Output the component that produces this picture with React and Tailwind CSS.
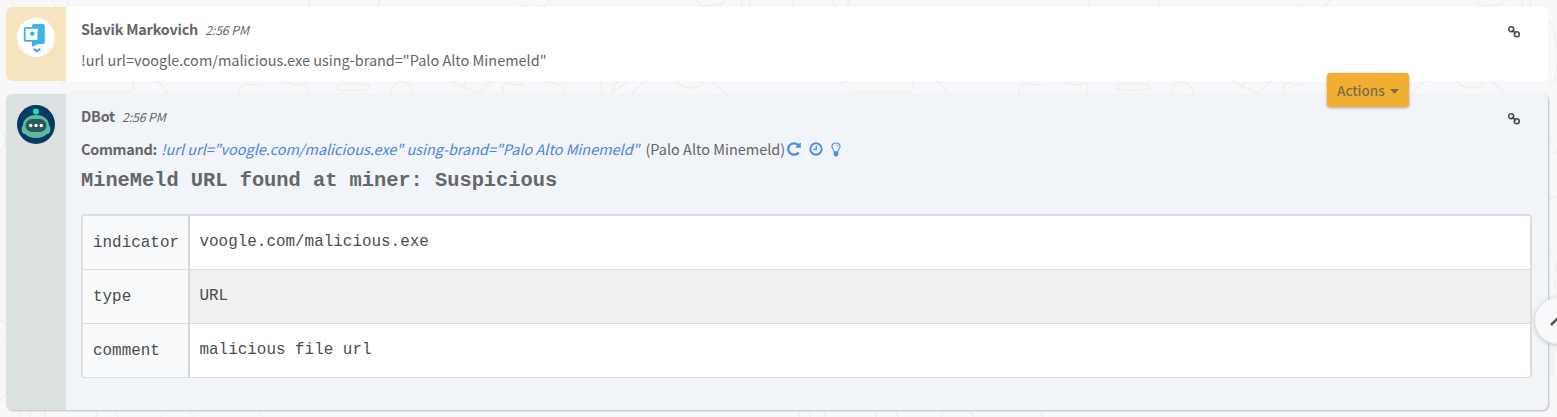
const sans = "font-['Noto_Sans_CJK_SC','Noto_Sans',sans-serif]";
const mono = "font-['Liberation_Mono',monospace]";

function LinkIcon() {
  return (
    <svg viewBox="0 0 14 14" className="mt-1 -mr-px size-3.5 shrink-0" fill="none" stroke="#4a4a4a" strokeWidth="1.5">
      <circle cx="4.2" cy="4.2" r="2.500" />
      <circle cx="9.800" cy="9.300" r="2.500" />
      <path d="M4.800 5.200l4.200 3.200" strokeWidth="1.500" />
    </svg>
  );
}

function Doodle() {
  return (
    <g>
      <path d="M12 0c2 10 0 14 5 20s18 6 28 2M52 0l4 7M70 0c-3 4-3 8-3 8M60 84c8-6 20-2 24-8s12-6 16 0l28 2c8 2 6 14 0 14H70M150 78c10 2 20 14 22 30M262 84c-12 4-20-8-24 10M282 84c8-4 12 4 20 0s4 6 6 10" />
      <path d="M310 0c-4 12-2 20 4 26M380 0l-8 22M338 84h28c4 0 4 6 0 6h-26c-4 0-4-6-2-6zm4 8l2 10M362 92l-2 8M390 96c2-18 20-20 24 0M450 80l28 14 14-14M460 88l6-6M504 92c-4-6 4-12 8-8s10-4 12 2M546 84c8-6 10 4 16 0s4 6 2 10M518 3c10 8 26 8 32-3M0 130c8 4 6 20-2 22M0 320c10 2 10 20 0 22M0 400c12-14 18-2 20 20M30 409v8M45 409v8M96 417c0-12 20-12 22 0M165 409l-4 8M180 409c8 0 12 4 14 8M255 409c4 2 6 4 8 8" />
      <path d="M602 94c-2-8 0-12 0-14M612 92c2-12 12-14 14-12s-10 10-14 12M632 94c12-14 16-16 26-16M674 78c8 12 24 14 30 2M706 76l20 18M696 0l6 6 20-2 4-6M742 0v8M750 0v8" />
    </g>
  );
}

function Backdrop() {
  return (
    <svg className="absolute inset-0 size-full" viewBox="0 0 1557 417" fill="none" stroke="#eeefef" strokeWidth="1.4">
      <Doodle />
      <g transform="translate(780 0)"><Doodle /></g>
      <path d="M1549 20c8 8 4 16 8 30M1549 88c6-10 8-16 8-28M1549 140c6 4 4 10 8 14M1549 200l8-6M1549 250c5 4 6 16 8 20M1549 280c8-4 8 10 2 8 8 2 6 10-2 8M1549 350h8M1552 354v24" />
    </svg>
  );
}

function UserAvatar() {
  return (
    <svg viewBox="0 0 38 39" className="h-[39px] w-[38px]">
      <ellipse cx="19" cy="19.5" rx="19" ry="19.5" fill="#fff" />
      <path d="M17 6h9q1.800 0 1.800 2v16q0 2-1.800 2h-4.500l-6.500 2.800V8q0-2 2-2z" fill="#3fb1e5" />
      <path d="M8.500 9.800h13.800l-1 5v8H8.500q-.8 0-.8-1v-11q0-1 .8-1z" fill="#fff" stroke="#3fb1e5" strokeWidth="1.800" />
      <circle cx="15.300" cy="15.800" r="2.200" fill="#3fb1e5" />
      <path d="M16.800 30.800l3.200 2.600 3.200-2.600" fill="none" stroke="#3fb1e5" strokeWidth="2.200" />
    </svg>
  );
}

function BotAvatar() {
  return (
    <svg viewBox="0 0 38 39" className="h-[39px] w-[38px]">
      <ellipse cx="19" cy="19.5" rx="19" ry="19.5" fill="#063a63" />
      <path d="M19 10c8 0 13 5 13 10q2 2 1 7-1 2-3 2-4 4-11 4T8 29q-2 0-3-2-1-5 1-7c0-5 5-10 13-10z" fill="#5cb8a1" />
      <rect x="8.500" y="14" width="21" height="13" rx="6.500" fill="#2a5957" />
      <circle cx="19" cy="6.500" r="3.600" fill="#063a63" />
      <circle cx="19" cy="6.500" r="2.900" fill="#0ff0a0" />
      <g fill="#fff"><circle cx="13.700" cy="20.500" r="1.700" /><circle cx="19" cy="20.500" r="1.700" /><circle cx="24.300" cy="20.500" r="1.700" /></g>
    </svg>
  );
}

function CommandIcons() {
  return (
    <div className="ml-0.5 flex items-center text-[#4a90e2]">
      <svg viewBox="0 0 1536 1792" className="h-4 w-3.5" fill="currentColor">
        <path d="M1536 256v448q0 26-19 45t-45 19h-448q-42 0-59-40-17-39 14-69l138-138Q969 384 768 384q-104 0-198.500 40.500T406 534 296.500 697.500 256 896t40.500 198.500T406 1258t163.500 109.500T768 1408q119 0 225-52t179-147q7-10 23-12 15 0 25 9l137 138q9 8 9.500 20.500t-7.500 22.500q-109 132-264 204.500T768 1664q-156 0-298-61t-245-164-164-245T0 896t61-298 164-245T470 189 768 128q147 0 284.500 55.500T1297 340l130-129q29-31 70-14 39 17 39 59z" />
      </svg>
      <svg viewBox="0 0 14 14" className="ml-2 size-3.5" fill="none" stroke="currentColor">
        <circle cx="7" cy="7" r="5.700" strokeWidth="1.900" />
        <path d="M7.300 3.500v4H4.500" strokeWidth="1.300" />
      </svg>
      <svg viewBox="0 0 10 15" className="ml-2 h-[15px] w-2.5" fill="none" stroke="currentColor">
        <path d="M3.200 9.500C3 7.500 1 6.800 1 4.500 1 2.300 2.800 1 5 1s4 1.300 4 3.500c0 2.300-2 3-2.200 5" strokeWidth="1.200" />
        <path d="M5 3q1.800 0 1.800 1.500" strokeWidth=".8" />
        <path d="M2.700 9.300h4.600v3.700L6 14.500H4L2.700 13z" fill="currentColor" stroke="none" />
      </svg>
    </div>
  );
}

function Header({ name }) {
  return (
    <div className="flex h-5 items-center justify-between pr-7">
      <div className="-mt-0.5 flex items-baseline leading-5">
        <b className="text-[14.4px] tracking-[-0.2px]">{name}</b>
        <i className="ml-[7px] text-[12.4px] tracking-[-0.15px]">2:56 PM</i>
      </div>
      <LinkIcon />
    </div>
  );
}

const rows = [
  ["indicator", "voogle.com/malicious.exe"],
  ["type", "URL"],
  ["comment", "malicious file url"],
];

export default function App() {
  return (
    <div className={`relative h-[417px] w-[1557px] overflow-hidden bg-[#f8f8fa] text-[#666] ${sans}`}>
      <Backdrop />
      <main className="relative flex flex-col gap-[13px] pt-[7px] pr-[9px] pl-1.5">
        <section className="flex h-[74px] overflow-hidden rounded-md bg-white">
          <div className="w-[60px] bg-[#f6e4c1] pt-[11px] pl-[11px]"><UserAvatar /></div>
          <div className="flex-1 pt-[13px] pl-[15px]">
            <Header name="Slavik Markovich" />
            <p className="mt-2.5 text-[14.47px] leading-5">!url url=voogle.com/malicious.exe using-brand="Palo Alto Minemeld"</p>
          </div>
        </section>
        <section className="flex h-[316px] rounded-md bg-[#f1f4f9] shadow-[1px_1px_2px_#bbb]">
          <div className="w-[60px] rounded-l-md bg-[#dbe2e1] pt-[11px] pl-[11px]"><BotAvatar /></div>
          <div className="flex-1 pt-[13px] pl-[15px]">
            <Header name="DBot" />
            <div className="mt-3 flex h-5 items-center text-[14.47px] leading-5 whitespace-nowrap">
              <b className="tracking-[-0.3px]">Command:</b>
              <i className="ml-1 tracking-[-0.01px] text-[#4a86dc]">!url url="voogle.com/malicious.exe" using-brand="Palo Alto Minemeld"</i>
              <span className="ml-1.5">(Palo Alto Minemeld)</span>
              <CommandIcons />
            </div>
            <h1 className={`mt-2.5 text-[20.35px] leading-6 font-bold ${mono}`}>MineMeld URL found at miner: Suspicious</h1>
            <div className={`mt-[21px] mr-4 h-[164px] overflow-hidden rounded border-2 border-b border-[#ddd] bg-white text-[15.93px] text-[#4c4c4c] ${mono}`}>
              {rows.map(([key, value]) => (
                <div key={key} className="flex h-[54px] border-b border-[#ddd] last:border-b-0 even:bg-[#f1f1f1]">
                  <div className="flex w-[107px] items-center border-r-2 border-[#d8d8d8] bg-[#f9fafc] pt-0.5 pl-2.5">{key}</div>
                  <div className="flex flex-1 items-center pl-[9.5px]">{value}</div>
                </div>
              ))}
            </div>
          </div>
        </section>
      </main>
      <button className="absolute top-[73px] left-[1327px] flex h-[34px] w-[82px] items-center rounded-[3px] bg-[#f2ae30] pl-2.5 text-[13.5px] font-medium text-[#7d6c50] shadow-[0_1px_3px_#aaa]">
        Actions
        <svg viewBox="0 0 9 5" className="mt-0.5 ml-[5px] h-[5px] w-[9px]"><path d="M0 0h9L4.500 5z" fill="#7d6c50" /></svg>
      </button>
      <div className="absolute top-[298px] left-[1535px] flex size-[46px] items-center justify-center rounded-full bg-[#f9f9fb] shadow-[0_1px_5px_#bbb]">
        <svg viewBox="0 0 18 12" className="h-3 w-[18px]"><path d="M2 10l7-7 7 7" fill="none" stroke="#555" strokeWidth="2.500" /></svg>
      </div>
    </div>
  );
}
